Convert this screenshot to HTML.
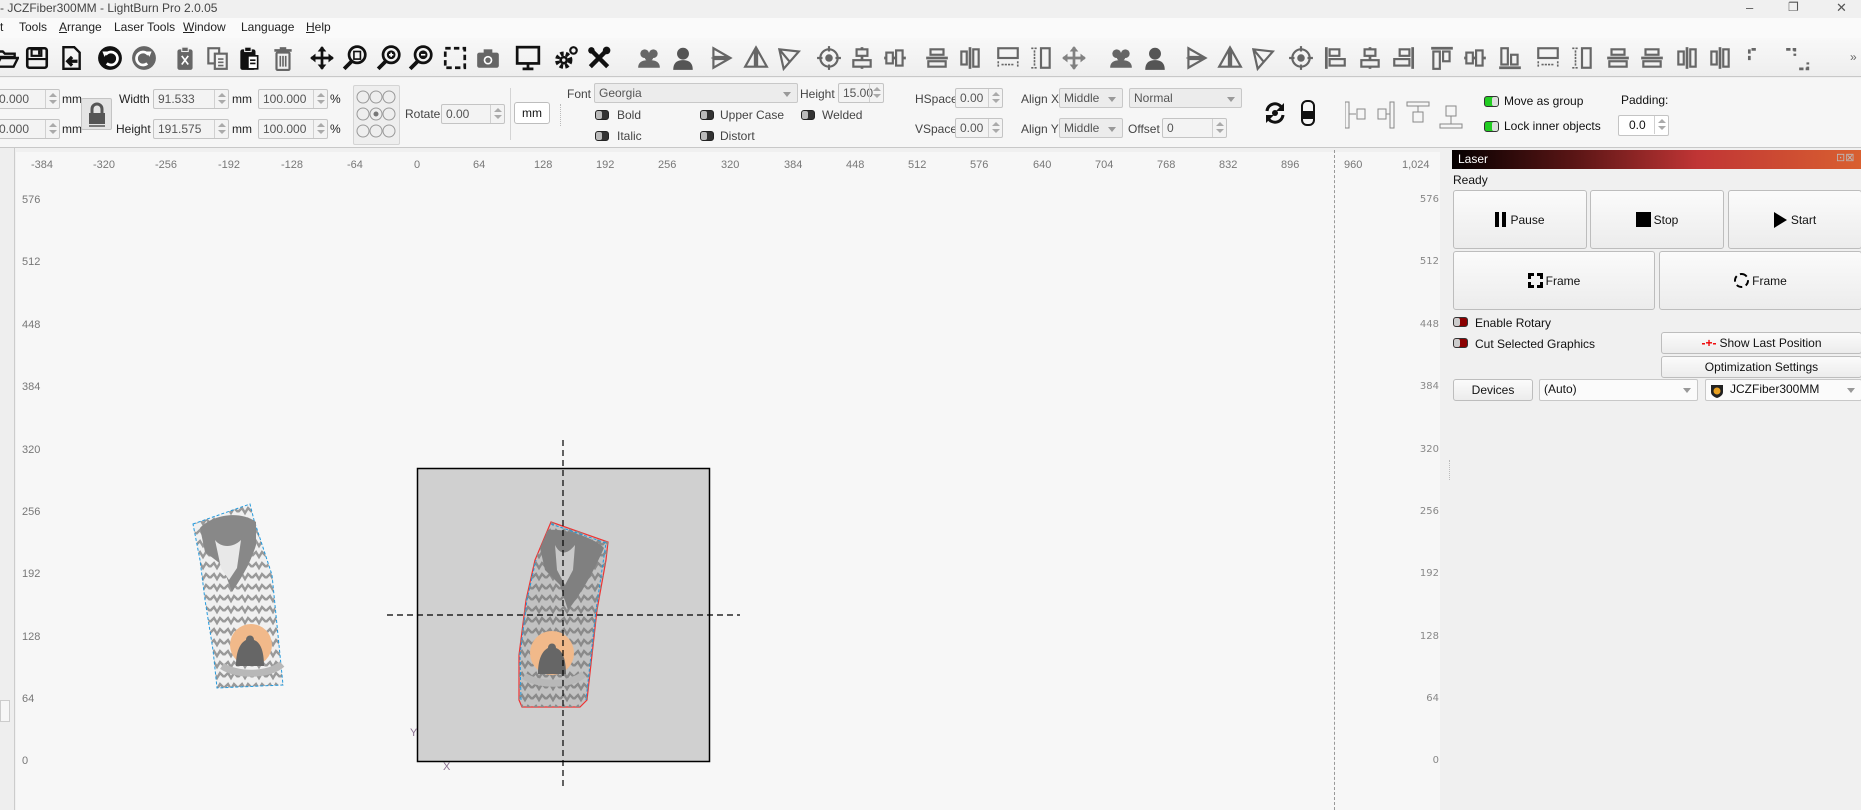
<!DOCTYPE html>
<html><head><meta charset="utf-8">
<style>
*{box-sizing:border-box;margin:0;padding:0}
body{width:1861px;height:810px;overflow:hidden;background:#f0f0f0;font-family:"Liberation Sans",sans-serif;font-size:12px;color:#222;position:relative}
.a{position:absolute}
.t{position:absolute;white-space:nowrap}
.inp{position:absolute;background:#f3f3f3;border:1px solid #c4c4c4;border-radius:2px;height:20px;font-size:12px;color:#555;padding:2px 4px;line-height:15px}
.inp .sp{position:absolute;right:0;top:0;width:14px;height:18px;border-left:1px solid #d0d0d0;}
.inp .sp:before{content:"";position:absolute;left:3px;top:3px;border:4px solid transparent;border-bottom:4px solid #aaa;border-top:0}
.inp .sp:after{content:"";position:absolute;left:3px;top:10px;border:4px solid transparent;border-top:4px solid #aaa;border-bottom:0}
.cmb{position:absolute;background:#ececec;border:1px solid #c8c8c8;border-radius:2px;height:20px;font-size:12px;color:#555;padding:2px 4px;line-height:15px}
.cmb:after{content:"";position:absolute;right:6px;top:8px;border:4px solid transparent;border-top:5px solid #999;border-bottom:0}
.tg{position:absolute;width:14px;height:10px;border-radius:3px;background:#333;border:1px solid #222}
.tg:before{content:"";position:absolute;left:0;top:0;width:6px;height:8px;background:#bbb;border-radius:2px}
.tgg{position:absolute;width:15px;height:11px;border-radius:3px;background:#22cc22;border:1px solid #333}
.tgg:after{content:"";position:absolute;right:0;top:0;width:6px;height:9px;background:#ddd;border-radius:2px}
.tgr{position:absolute;width:15px;height:10px;border-radius:3px;background:#8a0000;border:1px solid #333}
.tgr:before{content:"";position:absolute;left:0;top:0;width:6px;height:8px;background:#ccc;border-radius:2px}
.btn{position:absolute;background:linear-gradient(#fbfbfb,#ececec);border:1px solid #bdbdbd;border-radius:3px;font-size:12px;color:#111;display:flex;align-items:center;justify-content:center}
.ic{position:absolute;top:45px;width:26px;height:26px}
.rl{position:absolute;font-family:"Liberation Sans Narrow","Liberation Sans",sans-serif;font-size:11px;color:#777}
.rr{position:absolute;font-family:"DejaVu Sans",sans-serif;font-size:10px;color:#888;text-align:right;width:40px}
</style></head><body>

<div class="a" style="left:0;top:0;width:1861px;height:18px;background:#f0f0f0"></div>
<div class="t" style="left:0;top:1px;font-size:12px;color:#444;font-family:'Liberation Sans Narrow','Liberation Sans',sans-serif">- JCZFiber300MM - LightBurn Pro 2.0.05</div>
<div class="t" style="left:1746px;top:0;color:#555;font-size:13px">–</div>
<div class="t" style="left:1788px;top:0;color:#555;font-size:12px">❐</div>
<div class="t" style="left:1836px;top:0;color:#555;font-size:13px">✕</div>
<div class="a" style="left:0;top:18px;width:1861px;height:20px;background:#fafafa"></div>
<div class="t" style="top:20px;left:0;font-size:12px;font-family:'Liberation Sans Narrow','Liberation Sans',sans-serif">t</div>
<div class="t" style="top:20px;left:19px;font-size:12px;font-family:'Liberation Sans Narrow','Liberation Sans',sans-serif">Tools</div>
<div class="t" style="top:20px;left:59px;font-size:12px;font-family:'Liberation Sans Narrow','Liberation Sans',sans-serif"><u>A</u>rrange</div>
<div class="t" style="top:20px;left:114px;font-size:12px;font-family:'Liberation Sans Narrow','Liberation Sans',sans-serif">Laser Tools</div>
<div class="t" style="top:20px;left:183px;font-size:12px;font-family:'Liberation Sans Narrow','Liberation Sans',sans-serif"><u>W</u>indow</div>
<div class="t" style="top:20px;left:241px;font-size:12px;font-family:'Liberation Sans Narrow','Liberation Sans',sans-serif">Language</div>
<div class="t" style="top:20px;left:306px;font-size:12px;font-family:'Liberation Sans Narrow','Liberation Sans',sans-serif"><u>H</u>elp</div>
<div class="a" style="left:0;top:38px;width:1861px;height:39px;background:linear-gradient(#f8f8f8,#eeeeee);border-bottom:1px solid #c8c8c8"></div>

<svg width="0" height="0" style="position:absolute">
<defs>
<symbol id="folder" viewBox="0 0 24 24"><path d="M2 6h7l2 2h9v3H7l-4 9H2z M3 20l4-8h16l-4 8z" fill="none" stroke="#111" stroke-width="2.2"/></symbol>
<symbol id="save" viewBox="0 0 24 24"><rect x="3" y="3" width="18" height="18" rx="2" fill="none" stroke="#111" stroke-width="2.4"/><rect x="7" y="4" width="9" height="6" fill="none" stroke="#111" stroke-width="2"/><rect x="13" y="5" width="2" height="4" fill="#111"/><path d="M3 13h18" stroke="#111" stroke-width="2"/></symbol>
<symbol id="import" viewBox="0 0 24 24"><path d="M5 2h10l5 5v15H5z" fill="none" stroke="#111" stroke-width="2.2"/><path d="M18 15h-8 M13 11l-4 4 4 4" fill="none" stroke="#111" stroke-width="3"/></symbol>
<symbol id="undo" viewBox="0 0 24 24"><circle cx="12" cy="12" r="11" fill="#111"/><path d="M8 9a6 6 0 1 1 1 8" fill="none" stroke="#fff" stroke-width="2.5"/><path d="M5 6l5 0-3 5z" fill="#fff"/></symbol>
<symbol id="redo" viewBox="0 0 24 24"><circle cx="12" cy="12" r="11" fill="#666"/><path d="M16 9a6 6 0 1 0 -1 8" fill="none" stroke="#fff" stroke-width="2.5"/><path d="M19 6l-5 0 3 5z" fill="#fff"/></symbol>
<symbol id="cut" viewBox="0 0 24 24"><rect x="5" y="4" width="14" height="19" rx="2" fill="#666"/><rect x="9" y="2" width="6" height="4" fill="#666" stroke="#eee"/><path d="M9 18l6-8 M15 18l-6-8" stroke="#fff" stroke-width="1.5"/></symbol>
<symbol id="copy" viewBox="0 0 24 24"><rect x="4" y="3" width="10" height="14" fill="none" stroke="#666" stroke-width="2"/><rect x="10" y="8" width="11" height="14" fill="#f2f2f2" stroke="#666" stroke-width="2"/><path d="M13 13h5M13 16h5M13 19h5" stroke="#666" stroke-width="1.5"/></symbol>
<symbol id="paste" viewBox="0 0 24 24"><rect x="4" y="4" width="14" height="19" rx="2" fill="#111"/><rect x="8" y="2" width="6" height="4" fill="#111" stroke="#eee"/><rect x="11" y="10" width="9" height="12" fill="#fff" stroke="#111" stroke-width="1.5"/><path d="M13 14h5M13 17h5" stroke="#111" stroke-width="1.5"/></symbol>
<symbol id="trash" viewBox="0 0 24 24"><path d="M4 5h16" stroke="#666" stroke-width="2.5"/><rect x="9" y="2" width="6" height="3" fill="#666"/><rect x="6" y="7" width="12" height="16" rx="1" fill="none" stroke="#666" stroke-width="2"/><path d="M9.5 10v10M12 10v10M14.5 10v10" stroke="#666" stroke-width="1.5"/></symbol>
<symbol id="move" viewBox="0 0 24 24"><path d="M12 2v20M2 12h20" stroke="#111" stroke-width="2.5"/><path d="M12 1l-4 5h8zM12 23l-4-5h8zM1 12l5-4v8zM23 12l-5-4v8z" fill="#111"/></symbol>
<symbol id="zpage" viewBox="0 0 24 24"><circle cx="14" cy="9" r="7.5" fill="none" stroke="#111" stroke-width="2.5"/><path d="M9 15l-7 7" stroke="#111" stroke-width="3.5"/><rect x="11" y="6" width="6" height="7" fill="none" stroke="#111" stroke-width="1.5"/></symbol>
<symbol id="zin" viewBox="0 0 24 24"><circle cx="14" cy="9" r="7.5" fill="none" stroke="#111" stroke-width="2.5"/><path d="M9 15l-7 7" stroke="#111" stroke-width="3.5"/><circle cx="14" cy="9" r="4" fill="#111"/><path d="M12 9h4M14 7v4" stroke="#fff" stroke-width="1.5"/></symbol>
<symbol id="zout" viewBox="0 0 24 24"><circle cx="14" cy="9" r="7.5" fill="none" stroke="#111" stroke-width="2.5"/><path d="M9 15l-7 7" stroke="#111" stroke-width="3.5"/><circle cx="14" cy="9" r="4" fill="#111"/><path d="M12 9h4" stroke="#fff" stroke-width="1.5"/></symbol>
<symbol id="sel" viewBox="0 0 24 24"><rect x="3" y="3" width="18" height="18" fill="none" stroke="#111" stroke-width="2.5" stroke-dasharray="5 3"/></symbol>
<symbol id="cam" viewBox="0 0 24 24"><rect x="2" y="7" width="20" height="14" rx="2" fill="#666"/><rect x="8" y="4" width="8" height="4" fill="#666"/><circle cx="12" cy="14" r="4" fill="#fff"/><circle cx="12" cy="14" r="2.5" fill="#666"/></symbol>
<symbol id="mon" viewBox="0 0 24 24"><rect x="2" y="2" width="20" height="15" fill="none" stroke="#111" stroke-width="2.5"/><path d="M12 17v4M7 22h10" stroke="#111" stroke-width="2.5"/></symbol>
<symbol id="gear" viewBox="0 0 24 24"><circle cx="9" cy="14" r="6" fill="none" stroke="#111" stroke-width="4" stroke-dasharray="3 2"/><circle cx="9" cy="14" r="4" fill="#111"/><circle cx="9" cy="14" r="1.6" fill="#eee"/><circle cx="18" cy="5" r="3" fill="none" stroke="#111" stroke-width="2"/></symbol>
<symbol id="tool" viewBox="0 0 24 24"><path d="M4 4l16 16M20 4L4 20" stroke="#111" stroke-width="4"/><circle cx="5" cy="5" r="3" fill="#111"/><circle cx="19" cy="5" r="3.5" fill="#111"/></symbol>
<symbol id="grp" viewBox="0 0 24 24"><circle cx="8" cy="8" r="4" fill="#666"/><circle cx="16" cy="8" r="4" fill="#666"/><circle cx="12" cy="11" r="4" fill="#666"/><path d="M2 21c0-6 5-7 10-7s10 1 10 7z" fill="#666"/></symbol>
<symbol id="usr" viewBox="0 0 24 24"><circle cx="12" cy="8" r="5.5" fill="#555"/><path d="M3 23c0-7 4-9 9-9s9 2 9 9z" fill="#555"/></symbol>
<symbol id="mir1" viewBox="0 0 24 24"><path d="M5 3l14 8-14 0zM5 13l14 0-14 8z" fill="none" stroke="#666" stroke-width="2"/><path d="M3 12h18" stroke="#666" stroke-dasharray="2 1"/></symbol>
<symbol id="mir2" viewBox="0 0 24 24"><path d="M11 4L2 20h9zM13 4l9 16h-9z" fill="none" stroke="#666" stroke-width="2"/></symbol>
<symbol id="mir3" viewBox="0 0 24 24"><path d="M4 4l18 2-14 16z M4 4l10 12" fill="none" stroke="#666" stroke-width="2"/></symbol>
<symbol id="tgt" viewBox="0 0 24 24"><circle cx="12" cy="12" r="8" fill="none" stroke="#666" stroke-width="2"/><circle cx="12" cy="12" r="3.5" fill="#666"/><path d="M12 1v5M12 18v5M1 12h5M18 12h5" stroke="#666" stroke-width="2"/></symbol>
<symbol id="al1" viewBox="0 0 24 24"><path d="M4 2v20" stroke="#666" stroke-width="2.5"/><rect x="7" y="4" width="9" height="6" fill="none" stroke="#666" stroke-width="2"/><rect x="7" y="13" width="14" height="6" fill="none" stroke="#666" stroke-width="2"/></symbol>
<symbol id="al2" viewBox="0 0 24 24"><path d="M12 2v20" stroke="#666" stroke-width="2.5"/><rect x="7" y="4" width="10" height="6" fill="#f0f0f0" stroke="#666" stroke-width="2"/><rect x="4" y="14" width="16" height="6" fill="#f0f0f0" stroke="#666" stroke-width="2"/></symbol>
<symbol id="al3" viewBox="0 0 24 24"><path d="M20 2v20" stroke="#666" stroke-width="2.5"/><rect x="8" y="4" width="9" height="6" fill="none" stroke="#666" stroke-width="2"/><rect x="3" y="13" width="14" height="6" fill="none" stroke="#666" stroke-width="2"/></symbol>
<symbol id="al4" viewBox="0 0 24 24"><path d="M2 3h20" stroke="#666" stroke-width="2.5"/><rect x="4" y="6" width="6" height="16" fill="none" stroke="#666" stroke-width="2"/><rect x="13" y="6" width="6" height="9" fill="none" stroke="#666" stroke-width="2"/></symbol>
<symbol id="al5" viewBox="0 0 24 24"><path d="M2 12h20" stroke="#666" stroke-width="2.5"/><rect x="4" y="7" width="6" height="10" fill="#f0f0f0" stroke="#666" stroke-width="2"/><rect x="13" y="5" width="6" height="14" fill="#f0f0f0" stroke="#666" stroke-width="2"/></symbol>
<symbol id="al6" viewBox="0 0 24 24"><path d="M2 21h20" stroke="#666" stroke-width="2.5"/><rect x="4" y="3" width="6" height="15" fill="none" stroke="#666" stroke-width="2"/><rect x="13" y="9" width="6" height="9" fill="none" stroke="#666" stroke-width="2"/></symbol>
<symbol id="al7" viewBox="0 0 24 24"><rect x="3" y="3" width="18" height="9" fill="none" stroke="#666" stroke-width="2"/><path d="M3 15v6M21 15v6M6 18h12" stroke="#666" stroke-width="1.5" stroke-dasharray="2 1"/></symbol>
<symbol id="al8" viewBox="0 0 24 24"><rect x="12" y="3" width="8" height="18" fill="none" stroke="#666" stroke-width="2"/><path d="M3 3h6M3 21h6M6 5v14" stroke="#666" stroke-width="1.5" stroke-dasharray="2 1"/></symbol>
<symbol id="al9" viewBox="0 0 24 24"><path d="M2 12h20" stroke="#666" stroke-width="2.5"/><rect x="6" y="4" width="12" height="5" fill="none" stroke="#666" stroke-width="2"/><rect x="4" y="15" width="16" height="5" fill="none" stroke="#666" stroke-width="2"/></symbol>
<symbol id="al10" viewBox="0 0 24 24"><path d="M12 2v20" stroke="#666" stroke-width="2.5"/><rect x="4" y="6" width="5" height="12" fill="none" stroke="#666" stroke-width="2"/><rect x="15" y="4" width="5" height="16" fill="none" stroke="#666" stroke-width="2"/></symbol>
<symbol id="cr1" viewBox="0 0 24 24"><path d="M4 14V4h8M4 7h0" fill="none" stroke="#666" stroke-width="2.5" stroke-dasharray="4 2"/></symbol>
<symbol id="cr2" viewBox="0 0 24 24"><path d="M2 4h8v6M14 22h8v-6" fill="none" stroke="#666" stroke-width="2.5" stroke-dasharray="4 2"/></symbol>
</defs></svg>

<svg class="ic" style="left:-7px"><use href="#folder" width="26" height="26"/></svg>
<svg class="ic" style="left:24px"><use href="#save" width="26" height="26"/></svg>
<svg class="ic" style="left:58px"><use href="#import" width="26" height="26"/></svg>
<svg class="ic" style="left:97px"><use href="#undo" width="26" height="26"/></svg>
<svg class="ic" style="left:131px"><use href="#redo" width="26" height="26"/></svg>
<svg class="ic" style="left:172px"><use href="#cut" width="26" height="26"/></svg>
<svg class="ic" style="left:204px"><use href="#copy" width="26" height="26"/></svg>
<svg class="ic" style="left:236px"><use href="#paste" width="26" height="26"/></svg>
<svg class="ic" style="left:270px"><use href="#trash" width="26" height="26"/></svg>
<svg class="ic" style="left:309px"><use href="#move" width="26" height="26"/></svg>
<svg class="ic" style="left:342px"><use href="#zpage" width="26" height="26"/></svg>
<svg class="ic" style="left:376px"><use href="#zin" width="26" height="26"/></svg>
<svg class="ic" style="left:408px"><use href="#zout" width="26" height="26"/></svg>
<svg class="ic" style="left:442px"><use href="#sel" width="26" height="26"/></svg>
<svg class="ic" style="left:475px"><use href="#cam" width="26" height="26"/></svg>
<svg class="ic" style="left:515px"><use href="#mon" width="26" height="26"/></svg>
<svg class="ic" style="left:554px"><use href="#gear" width="26" height="26"/></svg>
<svg class="ic" style="left:586px"><use href="#tool" width="26" height="26"/></svg>
<svg class="ic" style="left:636px"><use href="#grp" width="26" height="26"/></svg>
<svg class="ic" style="left:670px"><use href="#usr" width="26" height="26"/></svg>
<svg class="ic" style="left:708px"><use href="#mir1" width="26" height="26"/></svg>
<svg class="ic" style="left:743px"><use href="#mir2" width="26" height="26"/></svg>
<svg class="ic" style="left:775px"><use href="#mir3" width="26" height="26"/></svg>
<svg class="ic" style="left:816px"><use href="#tgt" width="26" height="26"/></svg>
<svg class="ic" style="left:849px"><use href="#al2" width="26" height="26"/></svg>
<svg class="ic" style="left:882px"><use href="#al5" width="26" height="26"/></svg>
<svg class="ic" style="left:924px"><use href="#al9" width="26" height="26"/></svg>
<svg class="ic" style="left:957px"><use href="#al10" width="26" height="26"/></svg>
<svg class="ic" style="left:995px"><use href="#al7" width="26" height="26"/></svg>
<svg class="ic" style="left:1028px"><use href="#al8" width="26" height="26"/></svg>
<svg class="ic" style="left:1061px"><use href="#move" width="26" height="26" opacity=".5"/></svg>
<svg class="ic" style="left:1108px"><use href="#grp" width="26" height="26"/></svg>
<svg class="ic" style="left:1142px"><use href="#usr" width="26" height="26"/></svg>
<svg class="ic" style="left:1183px"><use href="#mir1" width="26" height="26"/></svg>
<svg class="ic" style="left:1217px"><use href="#mir2" width="26" height="26"/></svg>
<svg class="ic" style="left:1249px"><use href="#mir3" width="26" height="26"/></svg>
<svg class="ic" style="left:1288px"><use href="#tgt" width="26" height="26"/></svg>
<svg class="ic" style="left:1322px"><use href="#al1" width="26" height="26"/></svg>
<svg class="ic" style="left:1357px"><use href="#al2" width="26" height="26"/></svg>
<svg class="ic" style="left:1391px"><use href="#al3" width="26" height="26"/></svg>
<svg class="ic" style="left:1429px"><use href="#al4" width="26" height="26"/></svg>
<svg class="ic" style="left:1462px"><use href="#al5" width="26" height="26"/></svg>
<svg class="ic" style="left:1497px"><use href="#al6" width="26" height="26"/></svg>
<svg class="ic" style="left:1535px"><use href="#al7" width="26" height="26"/></svg>
<svg class="ic" style="left:1569px"><use href="#al8" width="26" height="26"/></svg>
<svg class="ic" style="left:1605px"><use href="#al9" width="26" height="26"/></svg>
<svg class="ic" style="left:1639px"><use href="#al9" width="26" height="26"/></svg>
<svg class="ic" style="left:1674px"><use href="#al10" width="26" height="26"/></svg>
<svg class="ic" style="left:1707px"><use href="#al10" width="26" height="26"/></svg>
<svg class="ic" style="left:1745px"><use href="#cr1" width="26" height="26"/></svg>
<svg class="ic" style="left:1784px"><use href="#cr2" width="26" height="26"/></svg>
<div class="t" style="left:1850px;top:50px;color:#666;font-size:12px">»</div>

<div class="a" style="left:0;top:78px;width:1861px;height:70px;background:#f6f6f6;border-bottom:1px solid #c8c8c8"></div>
<div class="inp" style="left:-6px;top:89px;width:66px">0.000<div class="sp"></div></div>
<div class="t" style="left:62px;top:92px">mm</div>
<div class="inp" style="left:-6px;top:119px;width:66px">0.000<div class="sp"></div></div>
<div class="t" style="left:62px;top:122px">mm</div>
<div class="a" style="left:81px;top:98px;width:31px;height:32px;background:#e4e4e4;border:1px solid #c4c4c4;border-radius:2px"></div>
<svg class="a" style="left:87px;top:101px" width="20" height="26"><path d="M5 12V8a5 5 0 0 1 10 0v4" fill="none" stroke="#555" stroke-width="3"/><rect x="2" y="12" width="16" height="11" fill="#555"/><path d="M2 25h16" stroke="#555" stroke-width="1.5"/></svg>
<div class="t" style="left:119px;top:92px">Width</div>
<div class="inp" style="left:153px;top:89px;width:76px">91.533<div class="sp"></div></div>
<div class="t" style="left:232px;top:92px">mm</div>
<div class="inp" style="left:258px;top:89px;width:70px">100.000<div class="sp"></div></div>
<div class="t" style="left:330px;top:92px">%</div>
<div class="t" style="left:116px;top:122px">Height</div>
<div class="inp" style="left:153px;top:119px;width:76px">191.575<div class="sp"></div></div>
<div class="t" style="left:232px;top:122px">mm</div>
<div class="inp" style="left:258px;top:119px;width:70px">100.000<div class="sp"></div></div>
<div class="t" style="left:330px;top:122px">%</div>
<div class="a" style="left:353px;top:85px;width:47px;height:60px;background:#eee;border:1px solid #d4d4d4;border-radius:2px"></div>
<svg class="a" style="left:355px;top:88px" width="44" height="54" fill="none" stroke="#999"><circle cx="8" cy="9" r="6"/><circle cx="21" cy="9" r="6"/><circle cx="34" cy="9" r="6"/><circle cx="8" cy="26" r="6"/><circle cx="21" cy="26" r="6"/><circle cx="34" cy="26" r="6"/><circle cx="8" cy="43" r="6"/><circle cx="21" cy="43" r="6"/><circle cx="34" cy="43" r="6"/><circle cx="21" cy="26" r="2.5" fill="#777" stroke="none"/></svg>
<div class="t" style="left:405px;top:107px;color:#444">Rotate</div>
<div class="inp" style="left:441px;top:104px;width:64px">0.00<div class="sp"></div></div>
<div class="a" style="left:510px;top:88px;width:1px;height:52px;background:#d4d4d4"></div>
<div class="btn" style="left:514px;top:102px;width:36px;height:22px;background:#fff">mm</div>
<div class="a" style="left:560px;top:104px;width:2px;height:22px;border-left:1px dotted #bbb"></div>
<div class="t" style="left:567px;top:87px;color:#444">Font</div>
<div class="cmb" style="left:594px;top:83px;width:204px">Georgia</div>
<div class="t" style="left:800px;top:87px;color:#444">Height</div>
<div class="inp" style="left:838px;top:83px;width:46px;padding-right:14px">15.00<div class="sp"></div></div>
<div class="tg" style="left:595px;top:110px"></div><div class="t" style="left:617px;top:108px;color:#444">Bold</div>
<div class="tg" style="left:595px;top:131px"></div><div class="t" style="left:617px;top:129px;color:#444">Italic</div>
<div class="tg" style="left:700px;top:110px"></div><div class="t" style="left:720px;top:108px;color:#444">Upper Case</div>
<div class="tg" style="left:700px;top:131px"></div><div class="t" style="left:720px;top:129px;color:#444">Distort</div>
<div class="tg" style="left:801px;top:110px"></div><div class="t" style="left:822px;top:108px;color:#444">Welded</div>
<div class="t" style="left:915px;top:92px;color:#444">HSpace</div>
<div class="inp" style="left:955px;top:88px;width:48px">0.00<div class="sp"></div></div>
<div class="t" style="left:1021px;top:92px;color:#444">Align X</div>
<div class="cmb" style="left:1059px;top:88px;width:64px">Middle</div>
<div class="cmb" style="left:1129px;top:88px;width:113px">Normal</div>
<div class="t" style="left:915px;top:122px;color:#444">VSpace</div>
<div class="inp" style="left:955px;top:118px;width:48px">0.00<div class="sp"></div></div>
<div class="t" style="left:1021px;top:122px;color:#444">Align Y</div>
<div class="cmb" style="left:1059px;top:118px;width:64px">Middle</div>
<div class="t" style="left:1128px;top:122px;color:#444">Offset</div>
<div class="inp" style="left:1162px;top:118px;width:65px">0<div class="sp"></div></div>
<svg class="a" style="left:1262px;top:100px" width="26" height="26"><path d="M5 11a8 8 0 0 1 15-3 M21 15a8 8 0 0 1-15 3" fill="none" stroke="#111" stroke-width="3"/><path d="M22 3v8h-8zM4 23v-8h8z" fill="#111"/><circle cx="13" cy="13" r="3" fill="#111"/></svg>
<svg class="a" style="left:1300px;top:99px" width="16" height="28"><rect x="2" y="2" width="12" height="24" rx="5" fill="none" stroke="#111" stroke-width="2"/><rect x="3" y="12" width="10" height="8" fill="#111"/></svg>
<svg class="a" style="left:1345px;top:100px" width="120" height="30" fill="none" stroke="#888"><rect x="0" y="2" width="4" height="26"/><rect x="12" y="9" width="8" height="10"/><path d="M4 14h7"/><rect x="45" y="2" width="4" height="26"/><rect x="33" y="9" width="8" height="10"/><path d="M41 14h4"/><rect x="62" y="2" width="22" height="4"/><rect x="68" y="12" width="10" height="10"/><path d="M73 6v6"/><rect x="95" y="24" width="22" height="4"/><rect x="101" y="6" width="10" height="10"/><path d="M106 16v8"/></svg>
<div class="tgg" style="left:1484px;top:96px"></div><div class="t" style="left:1504px;top:94px;color:#111">Move as group</div>
<div class="tgg" style="left:1484px;top:121px"></div><div class="t" style="left:1504px;top:119px;color:#111">Lock inner objects</div>
<div class="t" style="left:1621px;top:93px;color:#111">Padding:</div>
<div class="inp" style="left:1618px;top:115px;width:51px;background:#fff;color:#111;height:21px;text-align:left;padding-left:10px">0.0<div class="sp"></div></div>

<div class="a" style="left:0;top:148px;width:15px;height:662px;background:#eeeeee;border-right:1px solid #ccc"></div>
<div class="a" style="left:0;top:700px;width:10px;height:22px;background:#f6f6f6;border:1px solid #ccc"></div>
<div class="a" style="left:16px;top:152px;width:1424px;height:658px;background:#f7f7f7"></div>
<div class="a" style="left:1440px;top:148px;width:12px;height:662px;background:#f0f0f0"></div>
<div class="a" style="left:1449px;top:460px;width:1px;height:20px;border-left:1px dotted #bbb"></div>

<div class="rl" style="left:31px;top:159px">-384</div>
<div class="rl" style="left:93px;top:159px">-320</div>
<div class="rl" style="left:155px;top:159px">-256</div>
<div class="rl" style="left:218px;top:159px">-192</div>
<div class="rl" style="left:281px;top:159px">-128</div>
<div class="rl" style="left:347px;top:159px">-64</div>
<div class="rl" style="left:414px;top:159px">0</div>
<div class="rl" style="left:473px;top:159px">64</div>
<div class="rl" style="left:534px;top:159px">128</div>
<div class="rl" style="left:596px;top:159px">192</div>
<div class="rl" style="left:658px;top:159px">256</div>
<div class="rl" style="left:721px;top:159px">320</div>
<div class="rl" style="left:784px;top:159px">384</div>
<div class="rl" style="left:846px;top:159px">448</div>
<div class="rl" style="left:908px;top:159px">512</div>
<div class="rl" style="left:970px;top:159px">576</div>
<div class="rl" style="left:1033px;top:159px">640</div>
<div class="rl" style="left:1095px;top:159px">704</div>
<div class="rl" style="left:1157px;top:159px">768</div>
<div class="rl" style="left:1219px;top:159px">832</div>
<div class="rl" style="left:1281px;top:159px">896</div>
<div class="rl" style="left:1344px;top:159px">960</div>
<div class="rl" style="left:1402px;top:159px">1,024</div>

<div class="rl" style="left:22px;top:194px">576</div>
<div class="rl" style="left:22px;top:256px">512</div>
<div class="rl" style="left:22px;top:319px">448</div>
<div class="rl" style="left:22px;top:381px">384</div>
<div class="rl" style="left:22px;top:444px">320</div>
<div class="rl" style="left:22px;top:506px">256</div>
<div class="rl" style="left:22px;top:568px">192</div>
<div class="rl" style="left:22px;top:631px">128</div>
<div class="rl" style="left:22px;top:693px">64</div>
<div class="rl" style="left:22px;top:755px">0</div>

<div class="rr" style="left:1399px;top:194px">576</div>
<div class="rr" style="left:1399px;top:256px">512</div>
<div class="rr" style="left:1399px;top:319px">448</div>
<div class="rr" style="left:1399px;top:381px">384</div>
<div class="rr" style="left:1399px;top:444px">320</div>
<div class="rr" style="left:1399px;top:506px">256</div>
<div class="rr" style="left:1399px;top:568px">192</div>
<div class="rr" style="left:1399px;top:631px">128</div>
<div class="rr" style="left:1399px;top:693px">64</div>
<div class="rr" style="left:1399px;top:755px">0</div>
<div class="a" style="left:1334px;top:150px;width:1px;height:660px;border-left:1px dashed #999"></div>

<svg class="a" style="left:0;top:0" width="1440" height="810">
<defs>
<pattern id="zz" width="14" height="11" patternUnits="userSpaceOnUse"><path d="M0 6l4-4 3 5 3-5 4 4" stroke="#8a8a8a" stroke-width="2.4" fill="none"/></pattern>
</defs>
<rect x="417.5" y="468.5" width="292" height="293" fill="#d0d0d0" stroke="#000" stroke-width="1.5"/>
<!-- right graphic -->
<path d="M551 522L608 542L606 560L597 610L587 700L580 707L522 707L519 700L519 655L526 600L535 560Z" fill="#c2c2c2" stroke="#e33" stroke-width="1.2"/>
<path d="M551 522L608 542L606 560L597 610L587 700L580 707L522 707L519 700L519 655L526 600L535 560Z" fill="url(#zz)"/>
<path d="M551 524L606 543L596 610L586 700 M521 700L520 655L527 600L536 560" fill="none" stroke="#29d" stroke-dasharray="3 2"/>
<path d="M548 530C565 528 595 538 604 548C592 575 580 595 568 610L560 585L545 570L540 548Z" fill="#808080"/>
<path d="M555 545c5 10 12 10 20 0l-2 25-8 15-8-15z" fill="#c8c8c8"/>
<circle cx="552" cy="653" r="22" fill="#f1b98a"/>
<path d="M538 674c0-18 6-24 10-26c0-6 8-6 8 0c6 2 10 10 10 26z" fill="#666"/>
<path d="M524 676c15 10 47 10 60 -2" stroke="#b8b8b8" stroke-width="7" fill="none"/>
<path d="M563 440V790" stroke="#000" stroke-dasharray="6 4" stroke-width="1.2"/>
<path d="M387 615H740" stroke="#000" stroke-dasharray="6 4" stroke-width="1.2"/>
<!-- left graphic -->
<path d="M193 524L250 504L254 520L272 575L283 685L217 688L213 650L205 600L200 560Z" fill="#f0f0f0"/>
<path d="M193 524L250 504L254 520L272 575L283 685L217 688L213 650L205 600L200 560Z" fill="url(#zz)" opacity=".85"/>
<path d="M193 524L250 504L254 520L272 575L283 685L217 688L213 650L205 600L200 560Z" fill="none" stroke="#29d" stroke-width="1" stroke-dasharray="3 2"/>
<path d="M200 528C212 515 240 510 256 522L256 545C250 565 240 580 232 592L222 565L205 552Z" fill="#888"/>
<path d="M215 540c6 8 18 8 26 0l-4 28-8 12-8-12z" fill="#e8e8e8"/>
<circle cx="251" cy="645" r="21" fill="#f1b98a"/>
<path d="M236 666c0-18 6-24 10-26c0-6 8-6 8 0c6 2 10 10 10 26z" fill="#666"/>
<path d="M222 666c15 10 47 10 60 -2" stroke="#b8b8b8" stroke-width="7" fill="none"/>
<text x="410" y="736" font-family="Liberation Sans" font-size="11" fill="#8a7090">Y</text>
<text x="443" y="770" font-family="Liberation Sans" font-size="11" fill="#8a7090">X</text>
</svg>

<div class="a" style="left:1452px;top:150px;width:409px;height:19px;background:linear-gradient(90deg,#050000 0%,#5a1515 30%,#c03535 60%,#d96030 100%)"></div>
<div class="t" style="left:1458px;top:152px;color:#fff;font-size:12px">Laser</div>
<div class="t" style="left:1836px;top:151px;color:#bbb;font-size:11px">⊡⊠</div>
<div class="t" style="left:1453px;top:173px;color:#111">Ready</div>
<div class="btn" style="left:1453px;top:190px;width:134px;height:59px"><span style="display:inline-block;width:4px;height:15px;background:#000;margin-right:3px"></span><span style="display:inline-block;width:4px;height:15px;background:#000;margin-right:4px"></span>Pause</div>
<div class="btn" style="left:1590px;top:190px;width:134px;height:59px"><span style="display:inline-block;width:15px;height:15px;background:#000;margin-right:3px"></span>Stop</div>
<div class="btn" style="left:1728px;top:190px;width:134px;height:59px"><span style="display:inline-block;border-left:13px solid #000;border-top:8px solid transparent;border-bottom:8px solid transparent;margin-right:4px"></span>Start</div>
<div class="btn" style="left:1453px;top:251px;width:202px;height:59px"><span style="display:inline-block;width:15px;height:15px;border:3px dashed #000;margin-right:3px"></span>Frame</div>
<div class="btn" style="left:1659px;top:251px;width:203px;height:59px"><span style="display:inline-block;width:15px;height:15px;border:2px dashed #000;border-radius:50%;margin-right:3px"></span>Frame</div>
<div class="tgr" style="left:1453px;top:317px"></div><div class="t" style="left:1475px;top:316px;color:#111">Enable Rotary</div>
<div class="tgr" style="left:1453px;top:338px"></div><div class="t" style="left:1475px;top:337px;color:#111">Cut Selected Graphics</div>
<div class="btn" style="left:1661px;top:332px;width:201px;height:22px"><span style="color:#e00;margin-right:3px;font-weight:bold">-+-</span>Show Last Position</div>
<div class="btn" style="left:1661px;top:356px;width:201px;height:22px">Optimization Settings</div>
<div class="btn" style="left:1453px;top:379px;width:80px;height:22px">Devices</div>
<div class="cmb" style="left:1539px;top:379px;width:159px;height:22px;background:#fbfbfb;color:#111">(Auto)</div>
<div class="cmb" style="left:1705px;top:379px;width:157px;height:22px;background:#fbfbfb;color:#111;padding-left:24px">JCZFiber300MM</div>
<svg class="a" style="left:1710px;top:383px" width="14" height="15"><path d="M1 2h12v7c0 3-3 5-6 6c-3-1-6-3-6-6z" fill="#222"/><circle cx="7" cy="8" r="3.5" fill="#e8a020"/></svg>
</body></html>
